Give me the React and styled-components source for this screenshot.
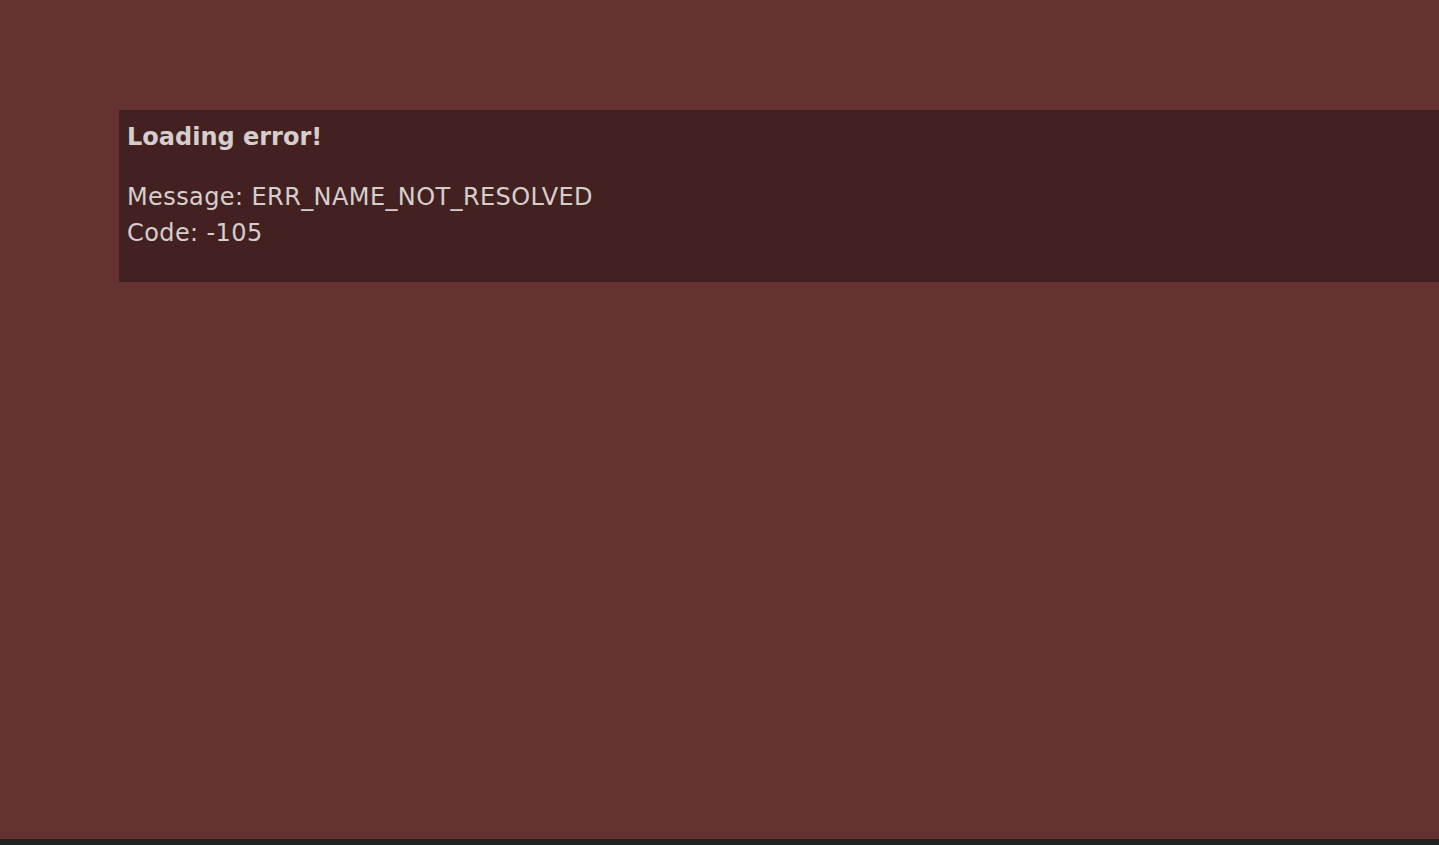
import React from 'react';
import styled, { createGlobalStyle } from 'styled-components';

const GlobalStyle = createGlobalStyle`
  html, body {
    margin: 0;
    padding: 0;
    background: #222222;
  }
`;

const Screen = styled.div`
  display: flex;
  flex-direction: column;
  height: 845px;
  overflow: hidden;
`;

const Stage = styled.main`
  height: 839px;
  background: #653232;
  padding-top: 110px;
  padding-left: 119px;
  box-sizing: border-box;
`;

const ErrorPanel = styled.section`
  background: #442121;
  color: #d6cece;
  font-family: 'DejaVu Sans', Verdana, sans-serif;
  padding: 9px 8px 0;
  height: 172px;
  box-sizing: border-box;
`;

const Title = styled.h1`
  margin: 0 0 24px;
  font-size: 24px;
  font-weight: bold;
  line-height: 36px;
`;

const Line = styled.div`
  font-size: 24px;
  line-height: 36px;
  letter-spacing: 0.4px;
`;

const App = () => (
  <>
    <GlobalStyle />
    <Screen>
      <Stage>
        <ErrorPanel>
          <Title>Loading error!</Title>
          <Line>Message: ERR_NAME_NOT_RESOLVED</Line>
          <Line>Code: -105</Line>
        </ErrorPanel>
      </Stage>
    </Screen>
  </>
);

export default App;
